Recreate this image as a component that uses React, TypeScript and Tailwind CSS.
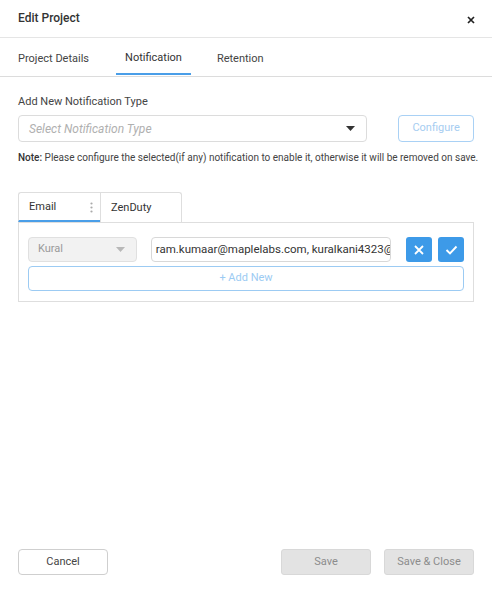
import React from "react";

const font = { fontFamily: "Roboto, 'Liberation Sans', sans-serif" };

function Caret({ className }: { className?: string }) {
  return (
    <svg width="9" height="5" viewBox="0 0 9 5" className={className}>
      <path d="M0 0 L9 0 L4.5 5 Z" fill="currentColor" />
    </svg>
  );
}

export default function App() {
  return (
    <div
      className="w-[492px] h-[597px] bg-white flex flex-col text-[11px] text-[#333]"
      style={font}
    >
      {/* header */}
      <div className="h-[38px] border-b border-[#e5e5e5] flex items-center justify-between px-[18px] shrink-0">
        <span className="text-[12px] font-medium text-[#333] -mt-[2px]">Edit Project</span>
        <svg width="8" height="8" viewBox="0 0 8 8" className="mt-[2px] mr-[-1px]">
          <path d="M1 1 L7 7 M7 1 L1 7" stroke="#222" strokeWidth="1.7" />
        </svg>
      </div>

      {/* tabs */}
      <div className="h-[39px] border-b border-[#dcdcdc] flex px-[9px] gap-[18px] shrink-0">
        <div className="px-[9px] flex items-center text-[#444] pt-[4px]">Project Details</div>
        <div className="px-[9px] flex items-center text-[#333] border-b-2 border-[#4a9ee8] mb-[1px] pt-[5px]">
          Notification
        </div>
        <div className="px-[9px] flex items-center text-[#444] -ml-px pt-[4px]">Retention</div>
      </div>

      {/* body */}
      <div className="flex-1 px-[18px] pt-[18px] flex flex-col">
        <div className="text-[11px] text-[#444] leading-[14px]">Add New Notification Type</div>
        <div className="flex mt-[6px]">
          <div className="w-[350px] h-[27px] border border-[#dcdcdc] rounded-[4px] flex items-center justify-between pl-[10px] pr-[11px]">
            <span className="italic text-[#b0b0b0] text-[12px]">Select Notification Type</span>
            <Caret className="text-[#333]" />
          </div>
          <div className="ml-[31px] w-[76px] h-[27px] border border-[#a9d1f5] rounded-[4px] flex items-center justify-center text-[#a6cdf1] text-[11px]">
            Configure
          </div>
        </div>
        <div className="mt-[10px] text-[10px] leading-[12px] text-[#444] whitespace-nowrap">
          <span className="font-medium text-[#333]">Note:</span> Please configure the selected(if any) notification to enable it, otherwise it will be removed on save.
        </div>

        {/* notification tabs */}
        <div className="mt-[28px] flex">
          <div className="w-[82px] h-[30px] border-t border-l border-[#dedede] rounded-tl-[3px] border-b-2 border-b-[#4a9ee8] flex items-center justify-between pl-[10px] pr-[7px] pt-[2px] text-[#333]">
            <span>Email</span>
            <svg width="3" height="11" viewBox="0 0 3 11">
              <circle cx="1.5" cy="1.5" r="1.1" fill="#aaa" />
              <circle cx="1.5" cy="5.5" r="1.1" fill="#aaa" />
              <circle cx="1.5" cy="9.5" r="1.1" fill="#aaa" />
            </svg>
          </div>
          <div className="w-[82px] h-[30px] border-t border-l border-r border-[#dedede] rounded-tr-[3px] flex items-center pl-[10px] pt-[1px] text-[#333]">
            ZenDuty
          </div>
        </div>
        <div className="border border-[#dedede] pt-[14px] pb-[10px] px-[9px] flex flex-col gap-[4px]">
          <div className="flex items-center">
            <div className="w-[109px] h-[25px] bg-[#f2f2f2] border border-[#e0e0e0] rounded-[4px] flex items-center justify-between pl-[9px] pr-[11px] text-[#9a9a9a] text-[11px]">
              <span>Kural</span>
              <Caret className="text-[#b8b8b8]" />
            </div>
            <div className="ml-[14px] w-[241px] h-[25px] border border-[#d8d8d8] rounded-[4px] flex items-center pl-[4px] overflow-hidden whitespace-nowrap text-[#333] text-[11.5px]">
              ram.kumaar@maplelabs.com, kuralkani4323@
            </div>
            <div className="ml-[15px] w-[26px] h-[25px] bg-[#3d9ae8] rounded-[3px] flex items-center justify-center">
              <svg width="10" height="10" viewBox="0 0 10 10">
                <path d="M1 1 L9 9 M9 1 L1 9" stroke="#fff" strokeWidth="1.8" />
              </svg>
            </div>
            <div className="ml-[6px] w-[26px] h-[25px] bg-[#3d9ae8] rounded-[3px] flex items-center justify-center">
              <svg width="13" height="10" viewBox="0 0 13 10">
                <path d="M1.5 5 L5 8.5 L11.5 1.5" stroke="#fff" strokeWidth="1.9" fill="none" />
              </svg>
            </div>
          </div>
          <div className="h-[25px] border border-[#9ccbf3] rounded-[4px] flex items-center justify-center text-[#9ccbf3]">
            + Add New
          </div>
        </div>
      </div>

      {/* footer */}
      <div className="flex items-center px-[18px] pb-[22px] shrink-0">
        <div className="w-[90px] h-[26px] border border-[#cfcfcf] rounded-[4px] flex items-center justify-center text-[#444]">
          Cancel
        </div>
        <div className="ml-auto w-[90px] h-[26px] bg-[#e3e3e3] border border-[#d8d8d8] rounded-[3px] flex items-center justify-center text-[#8c8c8c]">
          Save
        </div>
        <div className="ml-[13px] w-[90px] h-[26px] bg-[#e3e3e3] border border-[#d8d8d8] rounded-[3px] flex items-center justify-center text-[#8c8c8c]">
          Save &amp; Close
        </div>
      </div>
    </div>
  );
}
